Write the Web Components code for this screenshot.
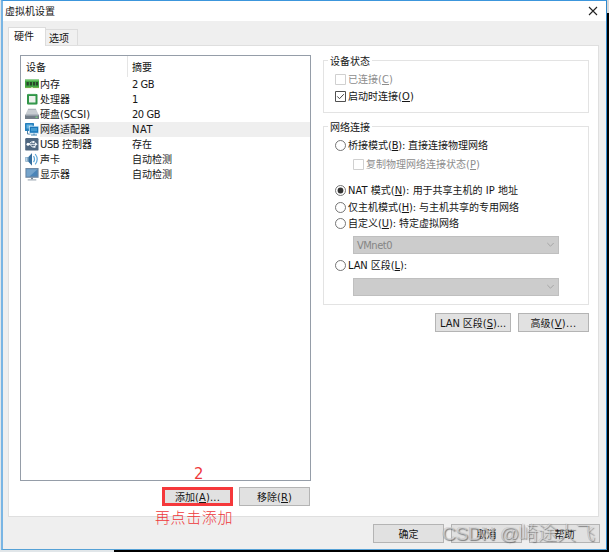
<!DOCTYPE html>
<html lang="zh-CN"><head><meta charset="utf-8"><title>虚拟机设置</title>
<style>
html,body{margin:0;width:609px;height:553px;overflow:hidden;background:#fff}
body{font:10px/15px "DejaVu Sans Condensed","Noto Sans CJK SC",sans-serif;color:#151515}
</style></head><body><vm-settings></vm-settings>
<script>
const define=(name,html,setup)=>customElements.define(name,class extends HTMLElement{
  connectedCallback(){
    if(this.shadowRoot)return;
    const t=document.createElement('template');t.innerHTML=html;
    this.attachShadow({mode:'open'}).append(t.content.cloneNode(true));
    if(setup)setup(this,this.shadowRoot);
  }
});
/* Label of the width "w": Latin runs are set slightly larger than CJK and take up the spacing difference. */
define('ui-text','<style>:host{display:inline-block;white-space:pre}span{display:inline-block;height:15px;line-height:15px}::slotted(*){line-height:0}</style><span><slot></slot></span>',(el,r)=>{
  const w=+el.getAttribute('w'),s=r.querySelector('span');
  const runs=[],scale=+el.getAttribute('latin')||1.1;
  const walk=document.createTreeWalker(el,NodeFilter.SHOW_TEXT),nodes=[];
  while(walk.nextNode())nodes.push(walk.currentNode);
  for(const n of nodes){
    const parts=n.data.split(/([ -~]+)/).filter(Boolean).map(p=>{
      if(!/^[ -~]/.test(p))return document.createTextNode(p);
      const e=document.createElement('span');e.textContent=p;e.style.cssText='line-height:0;font-size:'+scale+'em';runs.push(e);return e;
    });
    n.replaceWith(...parts);
  }
  if(!w)return;
  el.style.width=w+'px';
  const count=runs.reduce((a,e)=>a+e.textContent.length,0),gap=w-s.getBoundingClientRect().width;
  if(count)runs.forEach(e=>e.style.letterSpacing=gap/count+'px');
  else s.style.letterSpacing=gap/el.textContent.length+'px';
});
const icons={
memory:'<rect x="0" y="1.5" width="14" height="8.5" fill="#42a545"/><path d="M0 2.2h14" stroke="#79ce75"/><path d="M1.5 4h2.3v3.5H1.5zM4.8 4H7v3.5H4.8zM8 4h2.2v3.5H8zM11 4h2v3.5h-2z" fill="#29472b"/><path d="M.5 9.7h13" stroke="#b0bc50" stroke-dasharray="1 1"/><path d="M6.5 9h1v1h-1z" fill="#fff"/>',
cpu:'<rect x="2" y="1" width="10.5" height="10.5" rx="1" fill="#2f9447"/><rect x="4" y="3" width="6.5" height="6.5" fill="#edf1ed"/><path d="M3.5 1.2h8M3.5 11.3h8" stroke="#79c18a" stroke-dasharray="1 1"/>',
disk:'<path d="M3 1h8l2.8 6H.2z" fill="#c7cdd2"/><path d="M3 1.2h8" stroke="#929ba3" stroke-width=".7"/><path d="M0 6.8h14v4.2H0z" fill="#727d88"/><path d="M.5 7.2h13" stroke="#a5afb9"/><path d="M10.5 9.2h2" stroke="#7bea7b"/>',
net:'<rect x="0" y="0" width="9" height="8" rx=".6" fill="#257fbd"/><path d="M1.5 1.5h6v4h-6z" fill="#66b4e1"/><path d="M2.5 8v3h3" fill="none" stroke="#5080a5"/><rect x="4.3" y="3.2" width="9.4" height="7" fill="#1976b9" stroke="#d7edfa" stroke-width=".8"/><path d="M6 5h6v3.3H6z" fill="#429bd1"/><path d="M6 12h6M9 10.5V12" stroke="#397eae"/>',
usb:'<rect x=".2" y="0" width="13.3" height="12.6" rx="1.2" fill="#4e6680"/><path d="M2.5 6.3h8M4 6.3l2-2.3h2M5 6.3l2 2.6h2" fill="none" stroke="#e9eef3"/><circle cx="3" cy="6.3" r="1.5" fill="#fff"/><path d="M10 4.3l2.6 2-2.6 2zM7.5 3h2v2h-2zM8.5 7.8h2v2h-2z" fill="#f2f6fa"/>',
sound:'<path d="M.3 4h3L7 .2v12.2L3.3 8.8h-3z" fill="#7fa4c1"/><path d="M3.6 4L7 .2v12.2L3.6 8.8z" fill="#356e9e"/><path d="M1.7 4.5v3.6" stroke="#c8dff0"/><path d="M8.5 3.2q2 3 0 6M10.2 1q4 5.2 0 10.4" stroke="#5ba5d7" fill="none" stroke-width="1.2"/>',
display:'<rect x=".4" y="0" width="13.2" height="9.8" fill="#6f88a2"/><path d="M1.5 1.2h11v7.2h-11z" fill="#4b85b8"/><path d="M1.5 1.2h11L4.5 8.4h-3z" fill="#76a4cb"/><path d="M6 9.8h2v1.4H6z" fill="#788997"/><path d="M2.7 11.9h8.6" stroke="#a4afb9" stroke-width="1.2"/>'};
define('device-row',`<style>:host{display:flex;height:15px;padding-left:4px;align-items:center}
svg{width:14px;height:13px;flex:none;margin-right:1px}.r{flex:1;display:flex;height:15px;align-items:center}.n{width:92px;height:15px}
:host([selected]) .r{background:#efefef}</style><svg viewBox="0 0 14 13"></svg><div class="r"><div class="n"><slot></slot></div><slot name="summary"></slot></div>`,
(el,r)=>{r.querySelector('svg').innerHTML=icons[el.getAttribute('icon')]});
define('ui-button',`<style>:host{display:flex;box-sizing:border-box;height:19px;width:71px;padding-top:2px;border:1px solid #b4b4b4;background:#e1e1e1;justify-content:center;align-items:center}</style><slot></slot>`);
define('ui-group',`<style>:host{display:block;box-sizing:border-box;width:266px;border:1px solid #e3e3e3}
.t{display:block;width:max-content;background:#fff;padding:0 2px;margin:-7px 0 0 4px;height:15px}</style><span class="t"><slot name="title"></slot></span><slot></slot>`);
define('ui-choice',`<style>:host{display:flex;height:15px;align-items:center;padding-left:11px}
:host([disabled]){color:#8d8d8d}svg{width:11px;height:11px;flex:none;margin-right:2px}</style><svg viewBox="0 0 11 11"></svg><slot></slot>`,
(el,r)=>{const d=el.hasAttribute('disabled'),c=el.hasAttribute('checked'),k=d?'#d0d0d0':'#505050';
r.querySelector('svg').innerHTML=el.getAttribute('type')==='radio'
?`<circle cx="5.5" cy="5.5" r="5" fill="#fff" stroke="#666" stroke-width=".9"/>${c?'<circle cx="5.5" cy="5.5" r="2.9" fill="#333"/>':''}`
:`<path d="M.5.5h10v10H.5z" fill="#fff" stroke="${k}"/>${c?'<path d="M2.3 5.4l2.2 2.3 4.3-4.5" fill="none" stroke="#444"/>':''}`});
define('ui-select',`<style>:host{display:flex;box-sizing:border-box;width:206px;height:18px;margin-left:29px;padding:0 3px;background:#ccc;border:1px solid #bfbfbf;color:#858585;align-items:center;justify-content:space-between}
svg{width:9px;height:6px}</style><span><slot></slot></span><svg viewBox="0 0 9 6"><path d="M1.3 1l3.2 3.2L7.7 1" fill="none" stroke="#a6a6a6"/></svg>`);
define('device-list',`<style>:host{display:block;box-sizing:border-box;width:291px;height:426px;border:1px solid #959da8}
.h{display:flex;height:21px;align-items:center}.h>*{height:21px;display:flex;align-items:center;box-sizing:border-box;padding-top:2px}.a{width:107px;padding-left:5px;border-right:1px solid #e5e5e5}.b{padding-left:4px}</style>
<div class="h"><div class="a"><ui-text w="20">设备</ui-text></div><div class="b"><ui-text w="20">摘要</ui-text></div></div><slot></slot>`);
define('tab-strip',`<style>:host{display:flex;height:18px;align-items:flex-end;margin-left:8px}
.t{box-sizing:border-box;border:1px solid #dcdcdc;border-bottom:0;height:16px;padding:0 8px 0 3px;background:#f0f0f0;width:32px}
.on{height:19px;width:38px;background:#fff;position:relative;margin-bottom:-1px;padding:1px 0 0 5px;z-index:1}</style>
<div class="t on"><ui-text w="20">硬件</ui-text></div><div class="t" style="border-left:0;padding-top:1px"><ui-text w="20">选项</ui-text></div>`);
define('vm-settings',`<style>
:host{display:block;width:609px;height:552px;background:linear-gradient(90deg,#e1e6e9 114px,#000 114px);position:relative;overflow:hidden}
.win{box-sizing:border-box;margin-left:1px;width:606px;height:550px;border:solid #79b5e4;border-width:1px 1px 1px 2px;border-top-color:#3c96dc;border-bottom-color:#55a1d6;border-right-color:#2f88cb;background:#efefef}
.title{background:#fff;height:20px;display:flex;align-items:center;justify-content:space-between;padding:0 8px 0 2px}
.title svg{width:10px;height:10px}
.body{padding-top:6px;margin-left:-3px}
.panel{box-sizing:border-box;margin-left:8px;width:591px;height:472px;border:1px solid #dfdfdf;background:#fff;padding:9px 0 0 11px;display:flex;gap:12px}
.acts{display:flex;gap:6px;justify-content:flex-end;padding:6px 1px 0 0}
.right{padding-top:5px}.right .acts{gap:7px;padding:8px 0 0;width:266px}
.foot{display:flex;gap:7px;padding:7px 0 0 373px}
.add{outline:3px solid #f5383b;outline-offset:-3px}
.note{position:absolute;color:#ee383b;white-space:nowrap}
.mark{position:absolute;left:442px;top:526px;font:300 19px/15px "Liberation Sans","Noto Sans CJK SC",sans-serif;color:rgba(245,245,245,.5);text-shadow:1px 1px 1px rgba(70,70,70,.65),-.5px -.5px 0 rgba(120,120,120,.35)}
.edge{position:absolute;right:0;top:0;width:2px;height:13px;background:#d8d8d8}
</style><div class="win"><div class="title"><ui-text w="50">虚拟机设置</ui-text><svg viewBox="0 0 10 10"><path d="M1 1l8 8M9 1L1 9" stroke="#222" stroke-width="1.1"/></svg></div>
<div class="body"><tab-strip></tab-strip><div class="panel"><div>
<device-list>
<device-row icon="memory"><ui-text w="20">内存</ui-text><ui-text slot="summary" w="22">2 GB</ui-text></device-row>
<device-row icon="cpu"><ui-text w="30">处理器</ui-text><ui-text slot="summary">1</ui-text></device-row>
<device-row icon="disk"><ui-text w="50">硬盘(SCSI)</ui-text><ui-text slot="summary" w="28">20 GB</ui-text></device-row>
<device-row icon="net" selected><ui-text w="50">网络适配器</ui-text><ui-text slot="summary" w="21">NAT</ui-text></device-row>
<device-row icon="usb"><ui-text w="52">USB 控制器</ui-text><ui-text slot="summary" w="20">存在</ui-text></device-row>
<device-row icon="sound"><ui-text w="20">声卡</ui-text><ui-text slot="summary" w="40">自动检测</ui-text></device-row>
<device-row icon="display"><ui-text w="30">显示器</ui-text><ui-text slot="summary" w="40">自动检测</ui-text></device-row>
</device-list>
<div class="acts"><ui-button class="add"><ui-text w="45">添加(<u>A</u>)...</ui-text></ui-button><ui-button><ui-text w="35">移除(<u>R</u>)</ui-text></ui-button></div></div>
<div class="right">
<ui-group style="height:53px"><ui-text slot="title" w="40">设备状态</ui-text>
<ui-choice disabled style="margin-top:3px"><ui-text w="45">已连接(<u>C</u>)</ui-text></ui-choice>
<ui-choice checked style="margin-top:2px"><ui-text w="66">启动时连接(<u>O</u>)</ui-text></ui-choice></ui-group>
<ui-group style="height:179px;margin-top:13px"><ui-text slot="title" w="40">网络连接</ui-text>
<ui-choice type="radio" style="margin-top:3px"><ui-text w="140">桥接模式(<u>B</u>): 直接连接物理网络</ui-text></ui-choice>
<ui-choice disabled style="margin:4px 0 0 18px"><ui-text w="114">复制物理网络连接状态(<u>P</u>)</ui-text></ui-choice>
<ui-choice type="radio" checked style="margin-top:11px"><ui-text w="170">NAT 模式(<u>N</u>): 用于共享主机的 IP 地址</ui-text></ui-choice>
<ui-choice type="radio" style="margin-top:2px"><ui-text w="171">仅主机模式(<u>H</u>): 与主机共享的专用网络</ui-text></ui-choice>
<ui-choice type="radio" style="margin-top:1px"><ui-text w="111">自定义(<u>U</u>): 特定虚拟网络</ui-text></ui-choice>
<ui-select style="margin-top:5px"><ui-text w="35">VMnet0</ui-text></ui-select>
<ui-choice type="radio" style="margin-top:4px"><ui-text w="59">LAN 区段(<u>L</u>):</ui-text></ui-choice>
<ui-select style="margin-top:5px"></ui-select></ui-group>
<div class="acts"><ui-button style="width:76px"><ui-text w="66">LAN 区段(<u>S</u>)...</ui-text></ui-button><ui-button><ui-text w="46">高级(<u>V</u>)...</ui-text></ui-button></div>
</div></div>
<div class="foot"><ui-button><ui-text w="20">确定</ui-text></ui-button><ui-button><ui-text w="20">取消</ui-text></ui-button><ui-button><ui-text w="20">帮助</ui-text></ui-button></div>
</div></div><div class="edge"></div>
<div class="note" style="left:194px;top:465px;font-size:15px;line-height:18px"><ui-text>2</ui-text></div>
<div class="note" style="left:155px;top:511px;font:300 15px/15px 'Liberation Serif','Noto Sans CJK SC',serif"><ui-text w="78">再点击添加</ui-text></div>
<div class="mark"><ui-text w="153" latin="1">CSDN @崎途大飞</ui-text></div>`);
</script></body></html>
